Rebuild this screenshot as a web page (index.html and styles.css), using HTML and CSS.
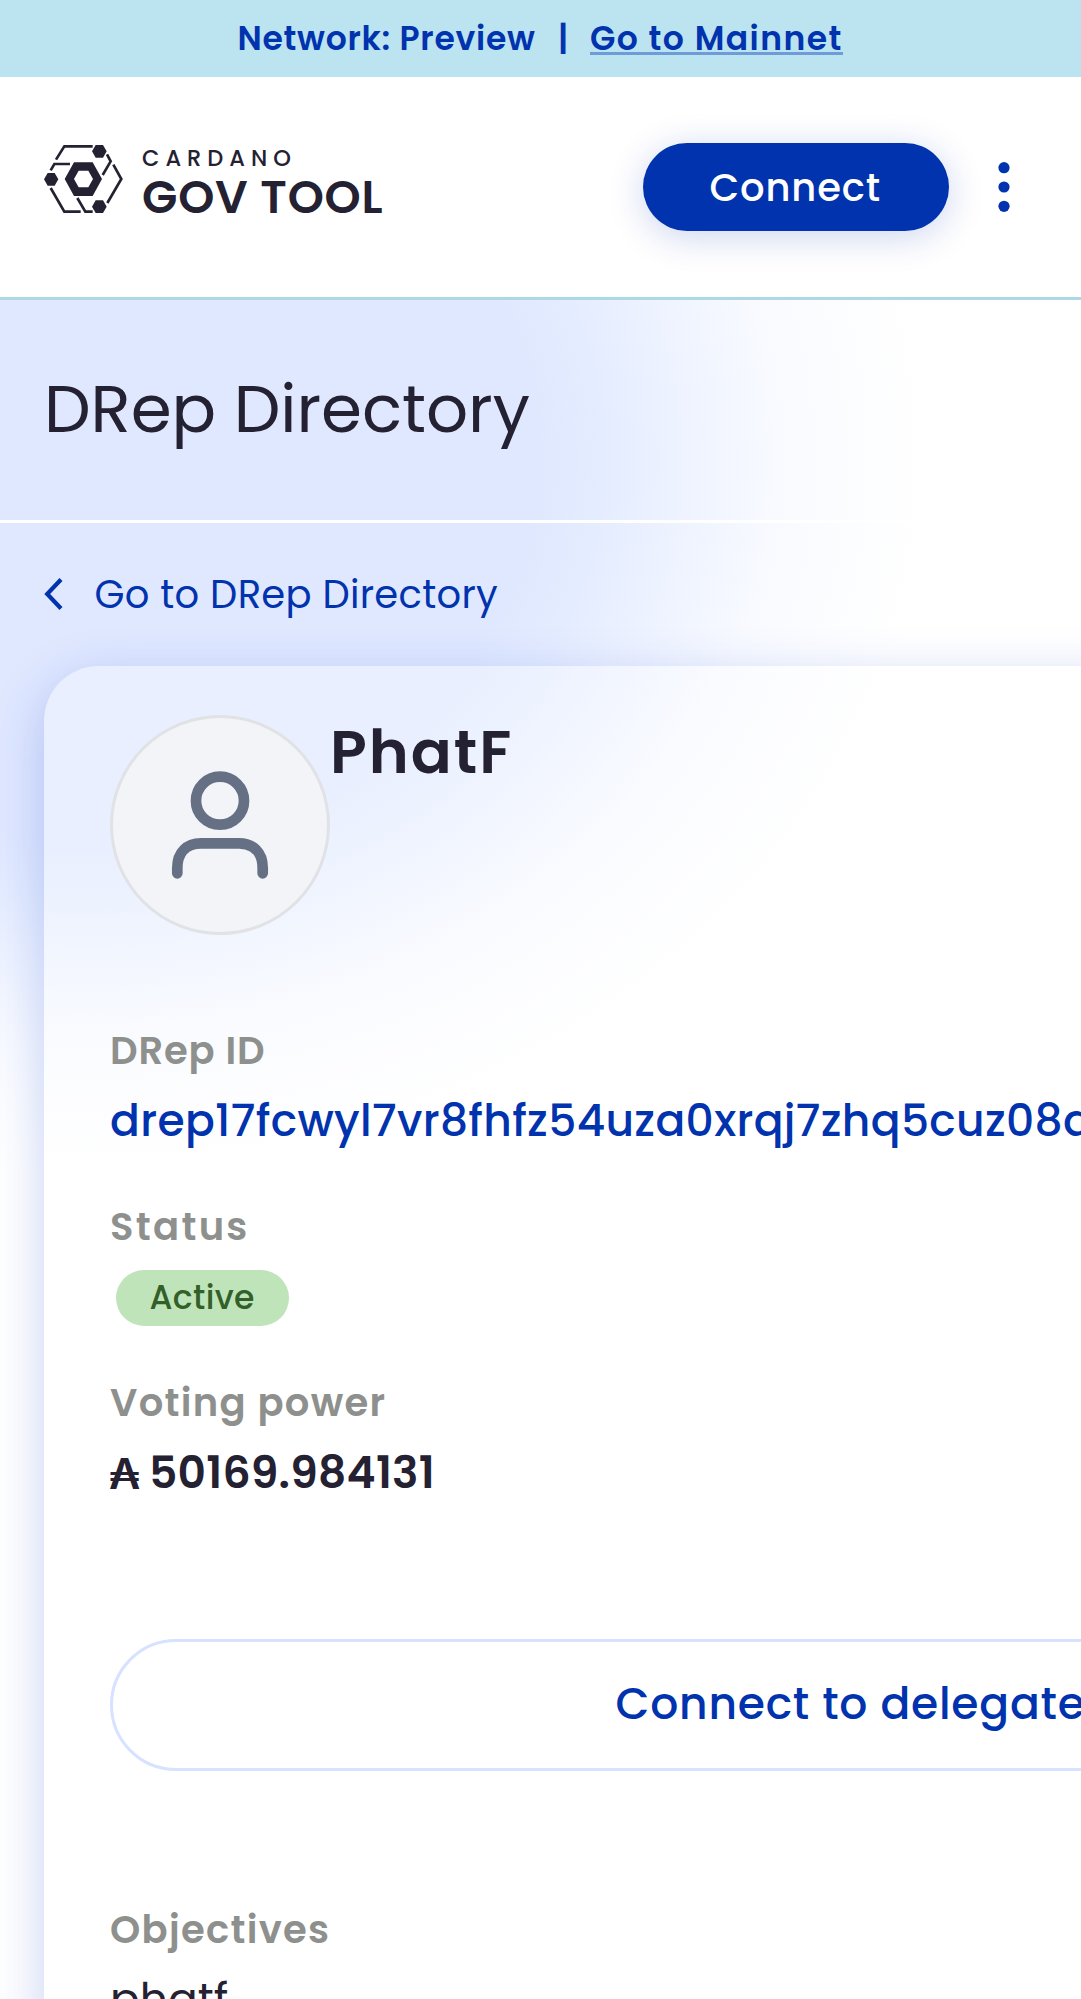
FILE: index.html
```html
<!DOCTYPE html>
<html lang="en">
<head>
<meta charset="utf-8">
<title>DRep Directory</title>
<link rel="stylesheet" href="styles.css">
</head>
<body>
<div class="network">
  <span class="network-name">Network: Preview</span>
  <span class="network-divider">|</span>
  <a class="network-link">Go to Mainnet</a>
</div>

<header class="topbar">
  <div class="logo">
    <svg class="logo-mark" viewBox="39 45 240 210" fill="none" stroke="#242232" stroke-width="8">
      <path d="M78 92 103 52H188M62 124 73 105H120M231 76 242 97 218 138M250 107 274 150 232 222M62 177 103 248H152M142 207 166 248H188"/>
      <g fill="#242232" stroke="none">
        <path d="M42 151 53 132H74L85 151 74 170H53Z"/>
        <path d="M186 67 197 48H219L230 67 219 86H197Z"/>
        <path d="M186 233 197 214H219L230 233 219 252H197Z"/>
        <path fill-rule="evenodd" d="M104 150 132 100H188L216 150 188 201H132ZM132 150 146 175H175L189 150 175 125H146Z"/>
      </g>
    </svg>
    <div class="logo-text">
      <span class="logo-small">CARDANO</span>
      <span class="logo-big">GOV TOOL</span>
    </div>
  </div>
  <button class="connect">Connect</button>
  <svg class="menu" viewBox="0 0 12 50" fill="#0033ad">
    <circle cx="6" cy="5.7" r="5.6"/><circle cx="6" cy="25" r="5.6"/><circle cx="6" cy="44.3" r="5.6"/>
  </svg>
</header>

<main class="page">
  <div class="title-bar"><h1 class="title">DRep Directory</h1></div>
  <a class="back">
    <svg class="chevron" viewBox="0 0 20 34" fill="none" stroke="#0033ad" stroke-width="4.2"><path d="M17 1.500 3.200 16 17 30.500"/></svg>
    <span>Go to DRep Directory</span>
  </a>

  <section class="card">
    <div class="profile">
      <svg class="avatar" viewBox="0 0 220 220" fill="none">
        <circle cx="110" cy="110" r="108.500" fill="#f2f4f8" stroke="#e0e2e5" stroke-width="3"/>
        <g stroke="#667085" stroke-width="10.700" stroke-linecap="round">
          <circle cx="110" cy="85.700" r="24"/>
          <path d="M67.300 158.300V153C67.300 137 77 128.600 91 128.400H129C143 128.600 152.700 137 152.700 153V158.300"/>
        </g>
      </svg>
      <h2 class="name">PhatF</h2>
    </div>

    <div class="fields">
      <div class="field">
        <div class="label id-label">DRep ID</div>
        <div class="value drep-id">drep17fcwyl7vr8fhfz54uza0xrqj7zhq5cuz08d</div>
      </div>
      <div class="field">
        <div class="label status-label">Status</div>
        <div class="value"><span class="chip">Active</span></div>
      </div>
      <div class="field">
        <div class="label">Voting power</div>
        <div class="value power"><span class="ada">₳</span><span>50169.984131</span></div>
      </div>
    </div>

    <button class="delegate">Connect to delegate</button>

    <div class="field">
      <div class="label">Objectives</div>
      <div class="value">phatf</div>
    </div>
  </section>
</main>
</body>
</html>
```
FILE: styles.css
```css
html {
  overflow: hidden;
}

body {
  margin: 0;
  width: 1081px;
  height: 1999px;
  overflow: hidden;
  background: #fff;
  color: #242232;
  font-family: "Poppins", "Inter", sans-serif;
  white-space: nowrap;
}

h1, h2 {
  margin: 0;
}

button {
  padding: 0;
  font: inherit;
  border: 0;
}

.network {
  display: flex;
  box-sizing: border-box;
  height: 77px;
  padding: 21px 0 0 237.5px;
  background: #bbe4f0;
  color: #0033ad;
  font-size: 33px;
  font-weight: 600;
  line-height: 36px;
}

.network-name {
  width: 315.5px;
  letter-spacing: 0.73px;
}

.network-divider {
  width: 20px;
  margin-right: 17px;
  text-align: center;
}

.network-link {
  height: 34px;
  letter-spacing: 1.45px;
  box-shadow: inset 0 -3px #6f9bd9;
}

.topbar {
  display: flex;
  align-items: center;
  box-sizing: border-box;
  height: 223px;
  padding: 0 0 0 43px;
  border-bottom: 3px solid #acd9e5;
}

.logo {
  display: flex;
  gap: 19px;
  width: 600px;
  margin-top: -9px;
}

.logo-mark {
  width: 80px;
  height: 70px;
}

.logo-text {
  display: flex;
  flex-direction: column;
}

.logo-small {
  height: 29px;
  font-size: 22.5px;
  font-weight: 500;
  line-height: 29px;
  letter-spacing: 6px;
}

.logo-big {
  font-size: 46px;
  font-weight: 600;
  line-height: 48px;
  letter-spacing: 0.8px;
}

.connect {
  box-sizing: border-box;
  width: 306px;
  height: 88px;
  padding: 0 0 0 66.5px;
  border-radius: 44px;
  background: #0033ad;
  box-shadow: 0 6px 36px rgba(0, 51, 173, 0.2);
  color: #fff;
  font-size: 38.5px;
  font-weight: 500;
  letter-spacing: 0.85px;
  text-align: left;
}

.menu {
  width: 12px;
  height: 50px;
  margin-left: 48.5px;
}

.page {
  height: 1699px;
  background: radial-gradient(ellipse 840px 710px at 90px 160px,
    #e0e8ff 53%, #e4ecff 61%, #eef3ff 71%, #f8faff 82%, #fcfdff 91%, #fff 100%);
}

.title-bar {
  box-sizing: border-box;
  height: 223px;
  padding-left: 44px;
  border-bottom: 3px solid #fff;
}

.title {
  font-size: 66px;
  font-weight: 400;
  line-height: 218px;
  letter-spacing: -0.05px;
}

.back {
  display: flex;
  align-items: center;
  gap: 31px;
  height: 143px;
  padding-left: 43.5px;
  color: #0033ad;
  font-size: 38.5px;
  letter-spacing: 0.3px;
}

.chevron {
  width: 20px;
  height: 34px;
}

.card {
  box-sizing: border-box;
  width: 1616px;
  height: 1600px;
  margin-left: 44px;
  padding: 49px 66px 0;
  border-radius: 55px;
  background: rgba(255, 255, 255, 0.3);
  box-shadow: 0 14px 50px rgba(44, 86, 210, 0.27);
}

.profile {
  display: flex;
  height: 310px;
}

.avatar {
  width: 220px;
  height: 220px;
}

.name {
  font-size: 60.5px;
  font-weight: 600;
  line-height: 74px;
  letter-spacing: 2px;
}

.fields {
  display: flex;
  flex-direction: column;
  gap: 47px;
}

.field {
  display: flex;
  flex-direction: column;
  gap: 10px;
}

.label {
  color: #8e908e;
  font-size: 38.5px;
  font-weight: 600;
  line-height: 52px;
  letter-spacing: 1.3px;
}

.id-label {
  letter-spacing: 0.85px;
}

.status-label {
  letter-spacing: 2.3px;
}

.value {
  display: flex;
  align-items: center;
  height: 67px;
  font-size: 44px;
  line-height: 66px;
}

.drep-id {
  color: #0033ad;
  font-weight: 500;
  letter-spacing: 0.34px;
}

.chip {
  box-sizing: border-box;
  width: 173px;
  height: 56px;
  margin: 2px 0 0 5.5px;
  padding-left: 34px;
  border-radius: 28px;
  background: #c0e4ba;
  color: #335f29;
  font-size: 33px;
  font-weight: 500;
  line-height: 56px;
  letter-spacing: 0.36px;
}

.power {
  gap: 8.500px;
  margin-left: -1px;
  font-weight: 600;
  letter-spacing: 0.24px;
}

.ada {
  font-family: "Inter", sans-serif;
  font-size: 43px;
}

.delegate {
  display: block;
  box-sizing: border-box;
  width: 1484px;
  height: 132px;
  margin: 133px 0 133px;
  padding: 0 3px 3px 0;
  border: 3px solid #d6e2ff;
  border-radius: 66px;
  background: transparent;
  color: #0033ad;
  font-size: 44px;
  font-weight: 500;
  letter-spacing: 0.78px;
}
```
